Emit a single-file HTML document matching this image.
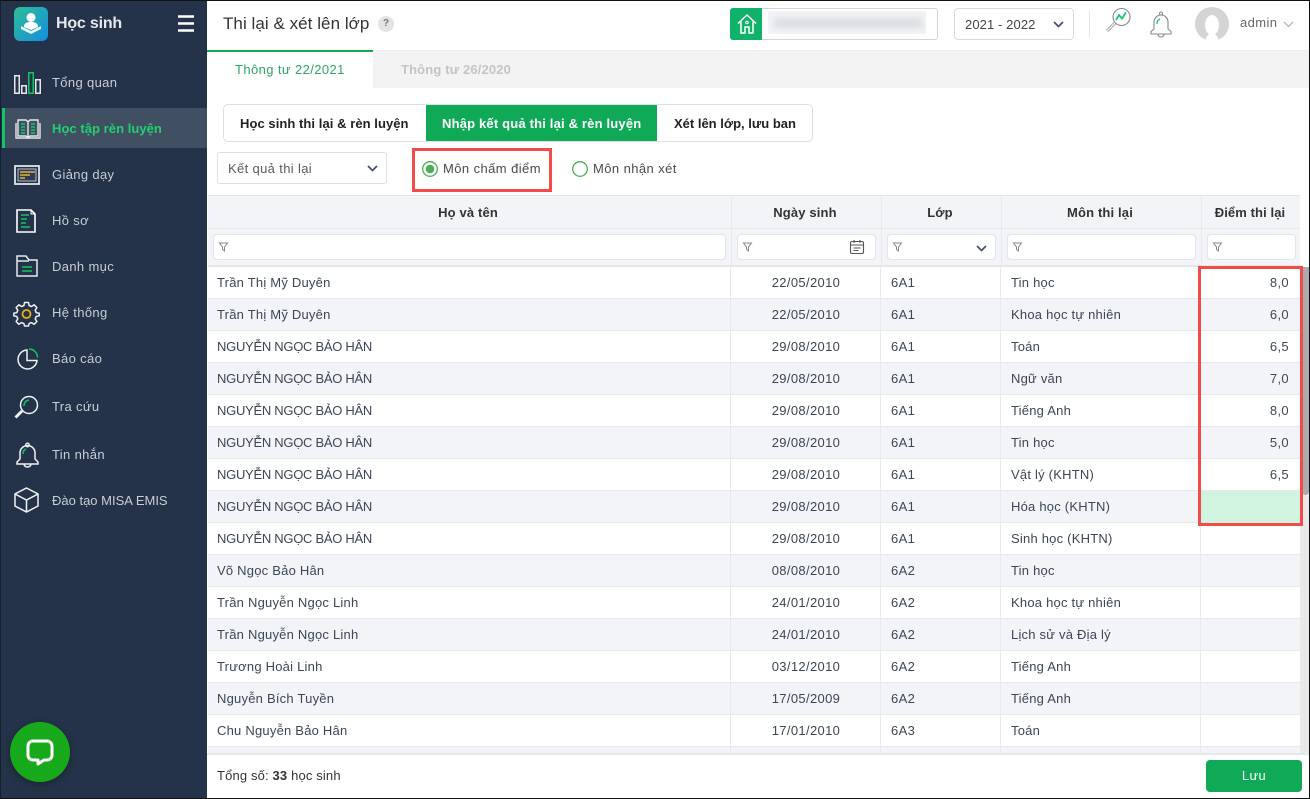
<!DOCTYPE html>
<html lang="vi"><head><meta charset="utf-8"><title>Thi lại &amp; xét lên lớp</title>
<style>
*{box-sizing:border-box}
html,body{margin:0;padding:0;width:1310px;height:799px;overflow:hidden;background:#fff}
body{position:relative;font-family:"Liberation Sans","Noto Sans CJK SC",sans-serif;font-size:13px;color:#3c4656;letter-spacing:.35px}
.a{position:absolute;white-space:nowrap}
svg{position:absolute;overflow:visible}
.nav{position:absolute;left:52px;color:#c9ced6;line-height:18px;white-space:nowrap}
.r{position:absolute;left:208px;width:1092px;height:32px;border-bottom:1px solid #e8e9ec;line-height:31px}
.r.e{background:#f3f4f8}
.r span{position:absolute;top:0;white-space:nowrap}
.n{left:9px;letter-spacing:.22px}.n.u{letter-spacing:-.28px}
.d{left:523px;width:150px;text-align:center}.c{left:683px}.s{left:803px;letter-spacing:.22px}
.p{left:993px;width:99px;text-align:right;padding-right:11px}
.v{position:absolute;width:1px;background:#e8e9ec}
.h{position:absolute;top:197px;height:31px;line-height:32px;text-align:center;font-weight:bold;color:#333;font-size:13px;letter-spacing:.15px}
.f{position:absolute;top:234px;height:26px;background:#fff;border:1px solid #e2e4e9;border-radius:4px}
</style></head><body>

<!-- sidebar -->
<div class="a" style="left:0;top:0;width:207px;height:799px;background:#243349"></div>
<div class="a" style="left:2px;top:108px;width:205px;height:40px;background:#414f63"></div>
<div class="a" style="left:2px;top:108px;width:3px;height:40px;background:#12c463"></div>

<svg style="left:14px;top:7px" width="34" height="34" viewBox="0 0 34 34"><defs><linearGradient id="g" x1="0" y1="0" x2="1" y2="1"><stop offset="0" stop-color="#2dbd94"/><stop offset="1" stop-color="#148ee0"/></linearGradient></defs><rect width="34" height="34" rx="6" fill="url(#g)"/><circle cx="17" cy="10.5" r="4.5" fill="#fff"/><path d="M10 20c0-4 3-5 7-5s7 1 7 5l-7 3z" fill="#fff"/><path d="M7 19l10 5 10-5v3l-10 5-10-5z" fill="#e8f6f8"/></svg>
<div class="a" style="left:56px;top:13px;font-size:16px;font-weight:bold;color:#e6e8ec;line-height:22px;letter-spacing:-.2px">Học sinh</div>
<svg style="left:178px;top:15px" width="16" height="17"><path d="M0 1.500h16M0 8.500h16M0 15.500h16" stroke="#fff" stroke-width="2.400"/></svg>

<svg style="left:0;top:0" width="50" height="100" fill="none" stroke="#e6e8ec" stroke-width="1.500"><rect x="14.750" y="75.750" width="4.500" height="17.500"/><rect x="21.750" y="85.750" width="4.500" height="7.500"/><rect x="28.750" y="72.750" width="4.500" height="20.500" stroke="#12c463"/><rect x="35.750" y="79.750" width="4.500" height="13.500"/></svg>
<div class="nav" style="top:74px">Tổng quan</div>

<svg style="left:15px;top:118px" width="26" height="22" fill="none" stroke="#e6e8ec" stroke-width="1.400"><path d="M3 2h8l2 2 2-2h8v16h-8l-2 2-2-2H3zM13 4v16M1 5v15h24V5"/><path d="M6 6h4M6 9h4M6 12h4M6 15h4M16 6h4M16 9h4M16 12h4M16 15h4" stroke="#12c463" stroke-width="1.600"/></svg>
<div class="nav" style="top:120px;color:#21d073;font-weight:bold;letter-spacing:.05px">Học tập rèn luyện</div>

<svg style="left:14px;top:165px" width="26" height="20" fill="none"><rect x="1" y="1" width="24" height="18" stroke="#e0e3e8" stroke-width="1.800"/><rect x="4" y="4" width="18" height="12" fill="#2d3c52" stroke="#e0e3e8" stroke-width=".8"/><path d="M6 7h15M6 10h10M6 13h5" stroke="#caa23a" stroke-width="1.800"/></svg>
<div class="nav" style="top:166px">Giảng dạy</div>

<svg style="left:16px;top:209px" width="20" height="24" fill="none"><path d="M1 1h14l4 4v18H1z" stroke="#fff" stroke-width="1.600"/><path d="M15 1v4h4" stroke="#fff" stroke-width="1"/><path d="M5 6h8M5 10h6M5 14h5M5 18h9" stroke="#12c463" stroke-width="1.500"/></svg>
<div class="nav" style="top:212px">Hồ sơ</div>

<svg style="left:16px;top:255px" width="22" height="22" fill="none"><path d="M1 21V1h9l3 4h8v16zM1 6h12" stroke="#e6e8ec" stroke-width="1.500"/><path d="M6 12h10M6 16h10" stroke="#12c463" stroke-width="1.600"/></svg>
<div class="nav" style="top:258px">Danh mục</div>

<svg style="left:14px;top:301px" width="25" height="25" fill="none" viewBox="0 0 25 25"><path d="M10.500 1.500h4l.6 3 2.400 1 2.600-1.700 2.800 2.800-1.700 2.600 1 2.400 3 .6v2.600l-3 .7-1 2.400 1.700 2.600-2.800 2.800-2.600-1.700-2.400 1-.6 2.400h-4l-.6-2.400-2.400-1-2.600 1.700-2.800-2.800 1.700-2.600-1-2.400-3-.7v-2.600l3-.6 1-2.400-1.700-2.600 2.800-2.800 2.600 1.700 2.400-1z" stroke="#f0f1f3" stroke-width="1.500" stroke-linejoin="round"/><circle cx="12.500" cy="13" r="4" stroke="#e8b10f" stroke-width="1.800"/></svg>
<div class="nav" style="top:304px">Hệ thống</div>

<svg style="left:16px;top:348px" width="23" height="23" fill="none"><path d="M11 2a9.500 9.500 0 1 0 10 10.500H11z" stroke="#f0f1f3" stroke-width="1.500"/><path d="M13 1a8.500 8.500 0 0 1 8.500 8.500" stroke="#12c463" stroke-width="1.500"/></svg>
<div class="nav" style="top:350px">Báo cáo</div>

<svg style="left:13px;top:395px" width="26" height="26" fill="none"><circle cx="16" cy="10" r="8.500" stroke="#f0f1f3" stroke-width="1.500"/><path d="M11 11a5.500 5.500 0 0 1 5-6" stroke="#12c463" stroke-width="1.500"/><path d="M9 16l-6.500 6.500" stroke="#f0f1f3" stroke-width="3"/></svg>
<div class="nav" style="top:398px">Tra cứu</div>

<svg style="left:15px;top:442px" width="25" height="26" fill="none"><circle cx="12.500" cy="3" r="1.800" stroke="#f0f1f3" stroke-width="1.300"/><path d="M5 17V11a7.500 7.500 0 0 1 15 0v6l3 3v2H2v-2zM9 22a3.500 3 0 0 0 7 0" stroke="#f0f1f3" stroke-width="1.500"/><path d="M8 12a5 5 0 0 1 3-5" stroke="#12c463" stroke-width="1.500"/></svg>
<div class="nav" style="top:446px">Tin nhắn</div>

<svg style="left:14px;top:487px" width="25" height="26" fill="none" stroke="#f0f1f3" stroke-width="1.500"><path d="M12.500 1L24 7v12l-11.500 6L1 19V7zM1 7l11.500 6L24 7M12.500 13v12"/></svg>
<div class="nav" style="top:492px;letter-spacing:0">Đào tạo MISA EMIS</div>

<!-- header -->
<div class="a" style="left:207px;top:0;width:1103px;height:50px;background:#fff;box-shadow:0 1px 3px rgba(0,0,0,.12)"></div>
<div class="a" style="left:223px;top:13px;font-size:17px;color:#333;line-height:22px;letter-spacing:.05px">Thi lại &amp; xét lên lớp</div>
<div class="a" style="left:378px;top:16px;width:16px;height:16px;border-radius:50%;background:#e4e4e4;color:#777;font-size:10px;line-height:16px;text-align:center;font-weight:bold;letter-spacing:0">?</div>

<!-- school picker -->
<div class="a" style="left:730px;top:8px;width:208px;height:32px;border:1px solid #d4d4d4;border-radius:3px;background:#fff"></div>
<div class="a" style="left:730px;top:8px;width:32px;height:32px;background:#10b168;border-radius:3px 0 0 3px"></div>
<svg style="left:737px;top:14px" width="20" height="20" fill="none" stroke="#fff" stroke-width="1.500"><path d="M1 9.500L10 1l9 8.500M4 7.500V19h4v-6h4v6h4V7.500"/><circle cx="10" cy="8.500" r="1.300" stroke-width="1"/></svg>
<div class="a" style="left:768px;top:11px;width:158px;height:23px;background:#f1f2f5;overflow:hidden"><div class="a" style="left:6px;top:7px;width:148px;height:10px;background:#dcdee3;filter:blur(3px)"></div></div>
<div class="a" style="left:954px;top:8px;width:120px;height:32px;border:1px solid #d9d9d9;border-radius:4px;padding-left:10px;line-height:31px;color:#444;letter-spacing:.1px">2021 - 2022</div>
<svg style="left:1053px;top:21px" width="11" height="7" fill="none"><path d="M1 1l4.500 4.500L10 1" stroke="#3d4a63" stroke-width="1.600"/></svg>
<div class="a" style="left:1089px;top:11px;width:1px;height:26px;background:#e5e5e5"></div>
<svg style="left:1095px;top:0" width="200" height="50" fill="none"><circle cx="26.500" cy="17" r="8.500" stroke="#888" stroke-width="1.100"/><path d="M21 20l3-5 3 3.500 4-6" stroke="#17c26b" stroke-width="1.800"/><path d="M20 23l-8 8" stroke="#999" stroke-width="3"/><path d="M20 23l-8 8" stroke="#fff" stroke-width="1.200"/>
<circle cx="66" cy="13.500" r="1.500" stroke="#888"/><path d="M59 29V22a7 7 0 0 1 14 0v7l3 2.500V34H56v-2.500zM63 34a3 3 0 0 0 6 0" stroke="#888" stroke-width="1.100"/><path d="M62 24a5 5 0 0 1 3-5" stroke="#17c26b" stroke-width="1.300"/>
<path d="M189 22l4.500 4.500L198 22" stroke="#aaa" stroke-width="1.100"/></svg>
<svg style="left:1195px;top:7px" width="34" height="34"><circle cx="17" cy="17" r="17" fill="#d4d4d4"/><ellipse cx="17" cy="18" rx="7" ry="10" fill="#fff"/><path d="M10 34c1-5 4-8 7-8s6 3 7 8z" fill="#fff"/></svg>
<div class="a" style="left:1240px;top:14px;line-height:18px;color:#666;letter-spacing:.4px">admin</div>

<!-- top tabs -->
<div class="a" style="left:373px;top:52px;width:937px;height:36px;background:#f3f3f3"></div>
<div class="a" style="left:207px;top:50px;width:166px;height:2px;background:#10a958"></div>
<div class="a" style="left:235px;top:61px;line-height:18px;color:#2da764;letter-spacing:.4px">Thông tư 22/2021</div>
<div class="a" style="left:401px;top:61px;line-height:18px;color:#c4c4c4;font-weight:bold;letter-spacing:.15px">Thông tư 26/2020</div>

<!-- segmented -->
<div class="a" style="left:223px;top:104px;width:590px;height:38px;border:1px solid #dfdfdf;border-radius:5px;background:#fff"></div>
<div class="a" style="left:426px;top:105px;width:231px;height:36px;background:#10a958"></div>
<div class="a" style="left:240px;top:115px;line-height:18px;font-weight:bold;color:#222;letter-spacing:.06px">Học sinh thi lại &amp; rèn luyện</div>
<div class="a" style="left:442px;top:115px;line-height:18px;font-weight:bold;color:#fff;letter-spacing:.18px">Nhập kết quả thi lại &amp; rèn luyện</div>
<div class="a" style="left:674px;top:115px;line-height:18px;font-weight:bold;color:#222;letter-spacing:0">Xét lên lớp, lưu ban</div>

<!-- select + radios -->
<div class="a" style="left:217px;top:152px;width:170px;height:32px;border:1px solid #dfdfdf;border-radius:3px;padding-left:10px;line-height:31px;color:#5a5a5a">Kết quả thi lại</div>
<svg style="left:367px;top:165px" width="11" height="7" fill="none"><path d="M1 1l4.500 4.500L10 1" stroke="#3d4a63" stroke-width="1.600"/></svg>
<div class="a" style="left:412px;top:148px;width:140px;height:44px;border:3px solid #f44a4a"></div>
<svg style="left:422px;top:161px" width="16" height="16"><circle cx="8" cy="8" r="7.300" fill="#fff" stroke="#4cae55" stroke-width="1.300"/><circle cx="8" cy="8" r="4.300" fill="#4cae55"/></svg>
<div class="a" style="left:443px;top:160px;line-height:18px;color:#4a4a4a;letter-spacing:.42px">Môn chấm điểm</div>
<svg style="left:572px;top:161px" width="16" height="16"><circle cx="8" cy="8" r="7.300" fill="#fff" stroke="#4cae55" stroke-width="1.300"/></svg>
<div class="a" style="left:593px;top:160px;line-height:18px;color:#4a4a4a;letter-spacing:.42px">Môn nhận xét</div>

<!-- table header -->
<div class="a" style="left:208px;top:195px;width:1092px;height:72px;background:#f3f4f8;border-top:1px solid #e3e4e8;border-bottom:2px solid #e6e6e6"></div>
<div class="a" style="left:208px;top:228px;width:1092px;height:1px;background:#e8e9ec"></div>
<div class="h" style="left:208px;width:520px">Họ và tên</div>
<div class="h" style="left:731px;width:148px">Ngày sinh</div>
<div class="h" style="left:881px;width:118px">Lớp</div>
<div class="h" style="left:1001px;width:198px">Môn thi lại</div>
<div class="h" style="left:1201px;width:98px;letter-spacing:.1px">Điểm thi lại</div>
<div class="f" style="left:213px;width:513px"></div>
<div class="f" style="left:737px;width:139px"></div>
<div class="f" style="left:887px;width:109px"></div>
<div class="f" style="left:1007px;width:189px"></div>
<div class="f" style="left:1207px;width:89px"></div>
<svg style="left:219px;top:242px" width="10" height="10" fill="none"><path d="M.5 1h8L5.500 5v4l-2-1.500V5z" stroke="#888" stroke-width="1"/></svg>
<svg style="left:743px;top:242px" width="10" height="10" fill="none"><path d="M.5 1h8L5.500 5v4l-2-1.500V5z" stroke="#888" stroke-width="1"/></svg>
<svg style="left:893px;top:242px" width="10" height="10" fill="none"><path d="M.5 1h8L5.500 5v4l-2-1.500V5z" stroke="#888" stroke-width="1"/></svg>
<svg style="left:1013px;top:242px" width="10" height="10" fill="none"><path d="M.5 1h8L5.500 5v4l-2-1.500V5z" stroke="#888" stroke-width="1"/></svg>
<svg style="left:1213px;top:242px" width="10" height="10" fill="none"><path d="M.5 1h8L5.500 5v4l-2-1.500V5z" stroke="#888" stroke-width="1"/></svg>
<svg style="left:849px;top:239px" width="16" height="16" fill="none" stroke="#555" stroke-width="1.100"><rect x="1.500" y="2.500" width="13" height="12" rx="1.500"/><path d="M1.500 6h13M5 1v3M11 1v3M4.500 9h7M4.500 11.500h5"/></svg>
<svg style="left:976px;top:245px" width="11" height="7" fill="none"><path d="M1 1l4.500 4.500L10 1" stroke="#3d4a63" stroke-width="1.600"/></svg>

<!-- rows -->
<div class="r" style="top:267px"><span class="n">Trần Thị Mỹ Duyên</span><span class="d">22/05/2010</span><span class="c">6A1</span><span class="s">Tin học</span><span class="p">8,0</span></div>
<div class="r e" style="top:299px"><span class="n">Trần Thị Mỹ Duyên</span><span class="d">22/05/2010</span><span class="c">6A1</span><span class="s">Khoa học tự nhiên</span><span class="p">6,0</span></div>
<div class="r" style="top:331px"><span class="n u">NGUYỄN NGỌC BẢO HÂN</span><span class="d">29/08/2010</span><span class="c">6A1</span><span class="s">Toán</span><span class="p">6,5</span></div>
<div class="r e" style="top:363px"><span class="n u">NGUYỄN NGỌC BẢO HÂN</span><span class="d">29/08/2010</span><span class="c">6A1</span><span class="s">Ngữ văn</span><span class="p">7,0</span></div>
<div class="r" style="top:395px"><span class="n u">NGUYỄN NGỌC BẢO HÂN</span><span class="d">29/08/2010</span><span class="c">6A1</span><span class="s">Tiếng Anh</span><span class="p">8,0</span></div>
<div class="r e" style="top:427px"><span class="n u">NGUYỄN NGỌC BẢO HÂN</span><span class="d">29/08/2010</span><span class="c">6A1</span><span class="s">Tin học</span><span class="p">5,0</span></div>
<div class="r" style="top:459px"><span class="n u">NGUYỄN NGỌC BẢO HÂN</span><span class="d">29/08/2010</span><span class="c">6A1</span><span class="s">Vật lý (KHTN)</span><span class="p">6,5</span></div>
<div class="r e" style="top:491px"><span class="n u">NGUYỄN NGỌC BẢO HÂN</span><span class="d">29/08/2010</span><span class="c">6A1</span><span class="s">Hóa học (KHTN)</span></div>
<div class="r" style="top:523px"><span class="n u">NGUYỄN NGỌC BẢO HÂN</span><span class="d">29/08/2010</span><span class="c">6A1</span><span class="s">Sinh học (KHTN)</span></div>
<div class="r e" style="top:555px"><span class="n">Võ Ngọc Bảo Hân</span><span class="d">08/08/2010</span><span class="c">6A2</span><span class="s">Tin học</span></div>
<div class="r" style="top:587px"><span class="n">Trần Nguyễn Ngọc Linh</span><span class="d">24/01/2010</span><span class="c">6A2</span><span class="s">Khoa học tự nhiên</span></div>
<div class="r e" style="top:619px"><span class="n">Trần Nguyễn Ngọc Linh</span><span class="d">24/01/2010</span><span class="c">6A2</span><span class="s">Lịch sử và Địa lý</span></div>
<div class="r" style="top:651px"><span class="n">Trương Hoài Linh</span><span class="d">03/12/2010</span><span class="c">6A2</span><span class="s">Tiếng Anh</span></div>
<div class="r e" style="top:683px"><span class="n">Nguyễn Bích Tuyền</span><span class="d">17/05/2009</span><span class="c">6A2</span><span class="s">Tiếng Anh</span></div>
<div class="r" style="top:715px"><span class="n">Chu Nguyễn Bảo Hân</span><span class="d">17/01/2010</span><span class="c">6A3</span><span class="s">Toán</span></div>
<div class="r e" style="top:747px;height:8px;border:0"></div>

<div class="a" style="left:1201px;top:491px;width:99px;height:32px;background:#d0f4e0"></div>

<!-- column lines -->
<div class="v" style="left:731px;top:196px;height:69px"></div>
<div class="v" style="left:881px;top:196px;height:69px"></div>
<div class="v" style="left:1001px;top:196px;height:69px"></div>
<div class="v" style="left:1201px;top:196px;height:69px"></div>
<div class="v" style="left:730px;top:267px;height:488px"></div>
<div class="v" style="left:880px;top:267px;height:488px"></div>
<div class="v" style="left:1000px;top:267px;height:488px"></div>
<div class="v" style="left:1200px;top:267px;height:488px"></div>

<!-- scrollbar -->
<div class="a" style="left:1300px;top:267px;width:9px;height:487px;background:#e9e9e9"></div>
<div class="a" style="left:1302px;top:267px;width:7px;height:228px;background:#ababab;border-radius:0 0 4px 4px"></div>

<!-- red box -->
<div class="a" style="left:1198px;top:266px;width:105px;height:260px;border:3px solid #f44a4a"></div>

<!-- footer -->
<div class="a" style="left:207px;top:753px;width:1103px;height:46px;background:#fff;border-top:2px solid #e6e7eb"></div>
<div class="a" style="left:217px;top:767px;line-height:18px;color:#333;letter-spacing:.15px">Tổng số: <b>33</b> học sinh</div>
<div class="a" style="left:1206px;top:760px;width:96px;height:32px;background:#10a958;border-radius:4px;color:#fff;text-align:center;line-height:32px">Lưu</div>

<!-- chat bubble -->
<div class="a" style="left:10px;top:722px;width:60px;height:60px;border-radius:50%;background:#17a81c;box-shadow:0 2px 8px rgba(0,0,0,.3)"></div>
<svg style="left:26px;top:739px" width="28" height="28" fill="none"><path d="M7 2h14a5 5 0 0 1 5 5v9a5 5 0 0 1-5 5h-3l-6 4v-4H7a5 5 0 0 1-5-5V7a5 5 0 0 1 5-5z" stroke="#fff" stroke-width="3" stroke-linejoin="round"/></svg>

<!-- outer frame -->
<div class="a" style="left:0;top:0;width:1310px;height:799px;border:1px solid #111;border-left-color:#10202e;pointer-events:none"></div>
</body></html>
